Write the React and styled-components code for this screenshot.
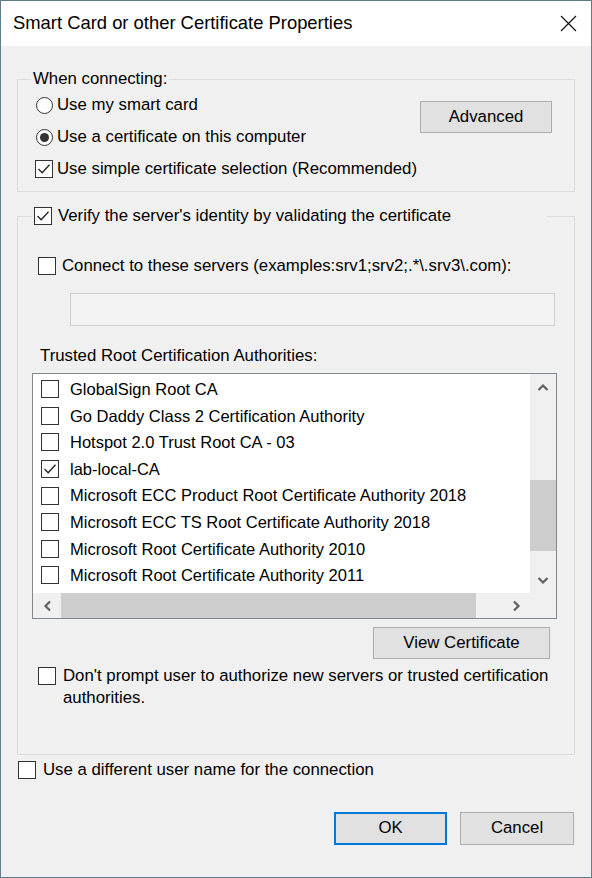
import React from 'react'
import styled, { createGlobalStyle } from 'styled-components'

const GlobalStyle = createGlobalStyle`
  html, body {
    margin: 0;
    padding: 0;
    background: #f0f0f0;
  }
  body {
    font-family: "Liberation Sans", Arial, sans-serif;
  }
`

const certificates = [
    { id: 1, name: 'GlobalSign Root CA', checked: false },
    { id: 2, name: 'Go Daddy Class 2 Certification Authority', checked: false },
    { id: 3, name: 'Hotspot 2.0 Trust Root CA - 03', checked: false },
    { id: 4, name: 'lab-local-CA', checked: true },
    { id: 5, name: 'Microsoft ECC Product Root Certificate Authority 2018', checked: false },
    { id: 6, name: 'Microsoft ECC TS Root Certificate Authority 2018', checked: false },
    { id: 7, name: 'Microsoft Root Certificate Authority 2010', checked: false },
    { id: 8, name: 'Microsoft Root Certificate Authority 2011', checked: false },
]

const Window = styled.div`
    width: 592px;
    height: 878px;
    box-sizing: border-box;
    border: 1px solid #5f7d8c;
    background: #f0f0f0;
    display: flex;
    flex-direction: column;
    font-size: 16.8px;
    line-height: 1;
    color: #000;
`

const TitleBar = styled.div`
    height: 45px;
    flex: none;
    background: #fff;
    display: flex;
    align-items: center;
    justify-content: space-between;
    padding: 0 14px 0 12px;
`

const Title = styled.span`
    font-size: 18.4px;
`

const CloseIcon = styled.svg`
    width: 17px;
    height: 17px;
    display: block;
`

const Content = styled.div`
    display: flex;
    flex-direction: column;
    padding: 0 16px;
`

const Group = styled.fieldset`
    margin: ${p => p.$top}px 0 0;
    padding: 0 0 ${p => p.$bottom}px;
    border: 1px solid #dcdcdc;
    min-width: 0;
    display: flex;
    flex-direction: column;
`

const Legend = styled.legend`
    margin-left: ${p => p.$left}px;
    padding: 0 2px;
    height: 20px;
    line-height: 20px;
    width: ${p => (p.$width ? `${p.$width}px` : 'auto')};
    box-sizing: border-box;
    display: flex;
    align-items: center;
    gap: ${p => p.$gap || 0}px;
`

const ConnectGrid = styled.div`
    display: grid;
    grid-template-columns: 1fr auto;
    align-items: start;
`

const OptionStack = styled.div`
    display: flex;
    flex-direction: column;
`

const Option = styled.label`
    display: flex;
    align-items: ${p => p.$align || 'center'};
    height: ${p => (p.$h ? `${p.$h}px` : 'auto')};
    margin: ${p => p.$mt || 0}px 0 0 ${p => p.$ml || 0}px;
    gap: ${p => p.$gap ?? 5}px;
    white-space: nowrap;
`

const Box = styled.span`
    width: ${p => p.$size || 18}px;
    height: ${p => p.$size || 18}px;
    box-sizing: border-box;
    border: 1px solid #333;
    background: #fff;
    display: inline-flex;
    align-items: center;
    justify-content: center;
    flex: none;
    margin-top: ${p => p.$mt || 0}px;
`

const Circle = styled(Box)`
    border-radius: 50%;
`

const Dot = styled.span`
    width: 9px;
    height: 9px;
    border-radius: 50%;
    background: #333;
`

const Button = styled.button`
    font: inherit;
    color: #000;
    width: ${p => p.$w}px;
    height: ${p => p.$h}px;
    margin: ${p => p.$mt || 0}px ${p => p.$mr || 0}px 0 0;
    padding: 0;
    box-sizing: border-box;
    background: #e1e1e1;
    border: ${p => (p.$default ? '2px solid #0078d7' : '1px solid #adadad')};
    align-self: ${p => p.$self || 'auto'};
    flex: none;
`

const TextInput = styled.div`
    width: 485px;
    height: 33px;
    margin: 17px 0 0 52px;
    box-sizing: border-box;
    background: #f3f3f3;
    border: 1px solid #cfcfcf;
`

const FieldLabel = styled.div`
    height: 18px;
    line-height: 18px;
    margin: 21px 0 0 22px;
`

const ListBox = styled.div`
    width: 525px;
    height: 246px;
    margin: 8px 0 0 14px;
    box-sizing: border-box;
    border: 1px solid #828790;
    display: grid;
    grid-template-columns: 1fr 26px;
    grid-template-rows: 1fr 25px;
    overflow: hidden;
`

const Items = styled.div`
    background: #fff;
    padding-top: 2px;
    overflow: hidden;
`

const Item = styled.div`
    height: 26.6px;
    display: flex;
    align-items: center;
    gap: 11px;
    padding-left: 8px;
    white-space: nowrap;
    font-size: 16.5px;
`

const VScroll = styled.div`
    background: #f0f0f0;
    display: flex;
    flex-direction: column;
    align-items: stretch;
`

const HScroll = styled.div`
    background: #f0f0f0;
    display: flex;
    align-items: stretch;
`

const Corner = styled.div`
    background: #f0f0f0;
`

const Arrow = styled.div`
    flex: none;
    width: ${p => p.$w}px;
    height: ${p => p.$h}px;
    display: flex;
    align-items: center;
    justify-content: center;
`

const Track = styled.div`
    flex: 1;
    display: flex;
    flex-direction: ${p => (p.$vertical ? 'column' : 'row')};
`

const Thumb = styled.div`
    background: #cdcdcd;
`

const Spacer = styled.div`
    flex: ${p => p.$grow};
`

const Footer = styled.div`
    display: flex;
    justify-content: flex-end;
    gap: 13px;
    margin-top: 32px;
    padding-right: 1px;
`

const CheckBox = ({ checked, size, mt }) => (
    <Box $size={size} $mt={mt}>
        {checked && (
            <svg width="16" height="16" viewBox="0 0 16 16">
                <polyline points="2.5,8 6.2,11.8 13.5,3.8" fill="none" stroke="#222" strokeWidth="1.3" />
            </svg>
        )}
    </Box>
)

const RadioButton = ({ checked }) => (
    <Circle $size={17}>{checked && <Dot />}</Circle>
)

const Chevron = ({ dir }) => {
    const paths = {
        up: 'M1.5 7 L6 2.5 L10.5 7',
        down: 'M1.5 2 L6 6.5 L10.5 2',
        left: 'M7 1.5 L2.5 6 L7 10.5',
        right: 'M2 1.5 L6.5 6 L2 10.5',
    }
    const horizontal = dir === 'left' || dir === 'right'
    return (
        <svg width={horizontal ? 9 : 12} height={horizontal ? 12 : 9} viewBox={horizontal ? '0 0 9 12' : '0 0 12 9'}>
            <path d={paths[dir]} fill="none" stroke="#606060" strokeWidth="2.2" />
        </svg>
    )
}

const App = () => {
    return (
        <>
            <GlobalStyle />
            <Window>
                <TitleBar>
                    <Title>Smart Card or other Certificate Properties</Title>
                    <CloseIcon viewBox="0 0 17 17">
                        <path d="M1 1 L16 16 M16 1 L1 16" stroke="#111" strokeWidth="1.2" fill="none" />
                    </CloseIcon>
                </TitleBar>

                <Content>
                    <Group $top={23} $bottom={6}>
                        <Legend $left={13}>When connecting:</Legend>
                        <ConnectGrid>
                            <OptionStack>
                                <Option $h={32} $ml={18} $gap={4}>
                                    <RadioButton />
                                    Use my smart card
                                </Option>
                                <Option $h={32} $ml={18} $gap={4}>
                                    <RadioButton checked />
                                    Use a certificate on this computer
                                </Option>
                                <Option $h={32} $ml={17} $gap={4}>
                                    <CheckBox checked />
                                    Use simple certificate selection (Recommended)
                                </Option>
                            </OptionStack>
                            <Button $w={132} $h={32} $mt={12} $mr={22}>Advanced</Button>
                        </ConnectGrid>
                    </Group>

                    <Group $top={14} $bottom={45}>
                        <Legend $left={14} $width={515} $gap={6}>
                            <CheckBox checked />
                            Verify the server's identity by validating the certificate
                        </Legend>

                        <Option $h={20} $mt={30} $ml={20} $gap={6}>
                            <CheckBox />
                            Connect to these servers (examples:srv1;srv2;.*\.srv3\.com):
                        </Option>
                        <TextInput />

                        <FieldLabel>Trusted Root Certification Authorities:</FieldLabel>
                        <ListBox>
                            <Items>
                                {certificates.map((cert) => (
                                    <Item key={cert.id}>
                                        <CheckBox checked={cert.checked} />
                                        {cert.name}
                                    </Item>
                                ))}
                            </Items>
                            <VScroll>
                                <Arrow $w={26} $h={26}><Chevron dir="up" /></Arrow>
                                <Track $vertical>
                                    <Spacer $grow={80} />
                                    <Thumb style={{ height: 71 }} />
                                    <Spacer $grow={16} />
                                </Track>
                                <Arrow $w={26} $h={26}><Chevron dir="down" /></Arrow>
                            </VScroll>
                            <HScroll>
                                <Arrow $w={28} $h={25}><Chevron dir="left" /></Arrow>
                                <Track>
                                    <Thumb style={{ width: 415 }} />
                                    <Spacer $grow={1} />
                                </Track>
                                <Arrow $w={28} $h={25}><Chevron dir="right" /></Arrow>
                            </HScroll>
                            <Corner />
                        </ListBox>

                        <Button $w={177} $h={32} $mt={8} $mr={24} $self="flex-end">View Certificate</Button>

                        <Option $align="flex-start" $mt={6} $ml={20} $gap={7}>
                            <CheckBox mt={2} />
                            <span style={{ lineHeight: '22px' }}>
                                Don't prompt user to authorize new servers or trusted certification
                                <br />
                                authorities.
                            </span>
                        </Option>
                    </Group>

                    <Option $h={20} $mt={5} $ml={1} $gap={7}>
                        <CheckBox />
                        Use a different user name for the connection
                    </Option>

                    <Footer>
                        <Button $w={113} $h={33} $default>OK</Button>
                        <Button $w={114} $h={33}>Cancel</Button>
                    </Footer>
                </Content>
            </Window>
        </>
    )
}

export default App
